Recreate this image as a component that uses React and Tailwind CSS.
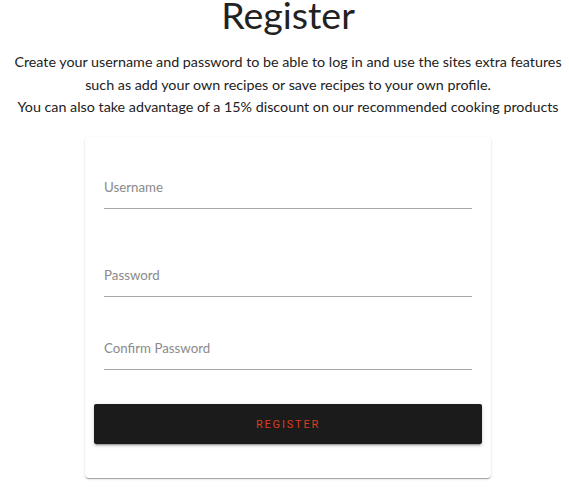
import React from 'react';

const fields = [
  { id: 'username', label: 'Username', type: 'text', gap: 'mt-0' },
  { id: 'password', label: 'Password', type: 'password', gap: 'mt-[56px]' },
  { id: 'confirm', label: 'Confirm Password', type: 'password', gap: 'mt-[41px]' },
];

export default function App() {
  return (
    <div className="w-[569px] h-[489px] overflow-hidden bg-white pl-[7px] font-['Lato',sans-serif] text-[#222]">
      {/* Heading */}
      <h1 className="-mt-[8px] text-center text-[37.5px] leading-[46px] font-normal">Register</h1>
      <p className="mt-[13px] text-center text-[14.3px] leading-[22.5px] whitespace-nowrap">
        Create your username and password to be able to log in and use the sites extra features
        <br />
        such as add your own recipes or save recipes to your own profile.
        <br />
        You can also take advantage of a 15% discount on our recommended cooking products
      </p>

      {/* Form card */}
      <form
        className="mx-auto mt-[18.5px] w-[406px] rounded-[4px] bg-white px-[9px] pt-[40px] pb-[34px] shadow-[0_2px_1px_-1px_rgba(0,0,0,0.2),0_1px_1px_0_rgba(0,0,0,0.14),0_1px_3px_0_rgba(0,0,0,0.12)]"
        onSubmit={(e) => e.preventDefault()}
      >
        {fields.map((f) => (
          <div key={f.id} className={`${f.gap} mx-[10px] border-b border-[#a8a8a8] pb-[11px]`}>
            <input
              id={f.id}
              type={f.type}
              placeholder={f.label}
              className="block w-full bg-transparent text-[13.3px] leading-[20px] text-[#222] placeholder:text-[#8a8a8a] outline-none"
            />
          </div>
        ))}

        <button
          type="submit"
          className="mt-[34px] block h-[40px] w-full rounded-[2px] bg-[#1b1b1b] pt-[2px] font-['Roboto',sans-serif] text-[11px] font-normal uppercase tracking-[1.8px] text-[#dc3d1e] shadow-[0_3px_1px_-2px_rgba(0,0,0,0.2),0_2px_2px_0_rgba(0,0,0,0.14),0_1px_5px_0_rgba(0,0,0,0.12)]"
        >
          Register
        </button>
      </form>
    </div>
  );
}
